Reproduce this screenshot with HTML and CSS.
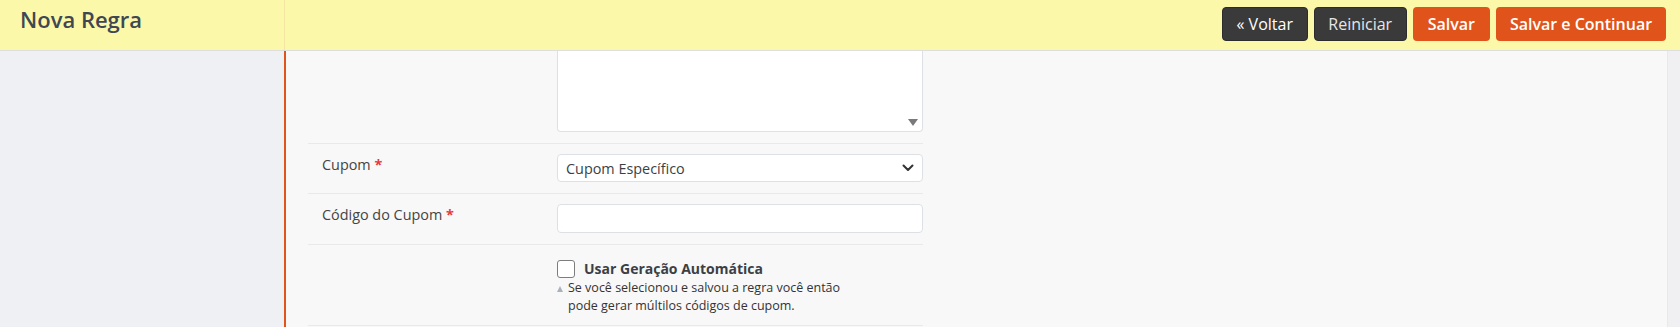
FILE: index.html
```html
<!DOCTYPE html>
<html lang="pt-BR">
<head>
  <meta charset="UTF-8" />
  <meta name="viewport" content="width=device-width, initial-scale=1.0" />
  <title>Nova Regra</title>
  <link rel="stylesheet" href="styles.css">
</head>
<body>

  <header class="topbar">
    <div class="brand">
      <h1>Nova Regra</h1>
    </div>
    <div class="actions">
      <button class="btn btn-dark btn-back">&laquo; Voltar</button>
      <button class="btn btn-dark btn-reset">Reiniciar</button>
      <button class="btn btn-primary">Salvar</button>
      <button class="btn btn-primary btn-continue">Salvar e Continuar</button>
    </div>
  </header>

  <div class="layout">
    <aside class="sidebar"></aside>

    <main class="content">
      <form class="rule-form">
        <div class="row row-textarea">
          <div class="label"></div>
          <div class="field">
            <div class="textarea">
              <span class="scroll-arrow"></span>
            </div>
          </div>
        </div>

        <div class="row">
          <label class="label">Cupom <span class="req">*</span></label>
          <div class="field">
            <div class="select">
              <span>Cupom Específico</span>
              <svg class="chevron" width="12" height="8" viewBox="0 0 12 8">
                <path d="M1.5 1.5 L6 6 L10.5 1.5" fill="none" stroke="#333" stroke-width="2" stroke-linecap="round" stroke-linejoin="round"/>
              </svg>
            </div>
          </div>
        </div>

        <div class="row">
          <label class="label">Código do Cupom <span class="req">*</span></label>
          <div class="field">
            <div class="input"></div>
          </div>
        </div>

        <div class="row row-check">
          <div class="label"></div>
          <div class="field">
            <label class="check">
              <span class="box"></span>
              <span class="check-text">Usar Geração Automática</span>
            </label>
            <p class="note">
              <span class="note-icon"></span>
              <span>Se você selecionou e salvou a regra você então<br>pode gerar múltilos códigos de cupom.</span>
            </p>
          </div>
        </div>
      </form>
    </main>

    <div class="scrollbar"></div>
  </div>

</body>
</html>
```

FILE: styles.css
```css
* {
  margin: 0;
  padding: 0;
  box-sizing: border-box;
}
body {
  font-family: 'Open Sans', 'Noto Sans', sans-serif;
  color: #333;
  background: #f8f8f8;
  height: 100vh;
  overflow: hidden;
}
.topbar {
  display: flex;
  align-items: stretch;
  height: 51px;
  background: #fcf8a9;
  border-bottom: 1px solid #dedede;
}
.brand {
  width: 285px;
  padding: 4px 20px 0;
  border-right: 1px solid #f3e6a2;
}
.brand h1 {
  font-size: 22px;
  font-weight: 600;
  color: #3f4753;
  line-height: 30px;
}
.actions {
  flex: 1;
  display: flex;
  justify-content: flex-end;
  gap: 6px;
  padding: 7px 14px 0 0;
}
.btn {
  height: 34px;
  padding: 0 15px;
  border: 0;
  border-radius: 4px;
  font-family: inherit;
  font-size: 16px;
  color: #fff;
  cursor: pointer;
}
.btn-dark {
  background: #3a3a3a;
  border: 1px solid #2c2c2c;
}
.btn-back {
  width: 86px;
  font-weight: 500;
  padding: 0;
}
.btn-reset {
  width: 93px;
  color: #e6e6e6;
  padding: 0;
}
.btn-primary {
  background: #e0531a;
  font-weight: 600;
}
.btn-continue {
  width: 170px;
  padding: 0;
}
.layout {
  display: flex;
  height: calc(100vh - 51px);
}
.sidebar {
  width: 284px;
  background: #eef0f4;
}
.content {
  flex: 1;
  background: #f8f8f8;
  border-left: 2px solid #e0531a;
  padding-left: 22px;
}
.scrollbar {
  width: 13px;
  background: #f0f0f2;
  border-left: 1px solid #e9e9ec;
}
.rule-form {
  width: 615px;
}
.row {
  display: flex;
  padding: 10px 0 11px;
  border-bottom: 1px solid #e9e9e9;
}
.label {
  width: 249px;
  padding-left: 14px;
  font-size: 14.4px;
  line-height: 22px;
  color: #444;
}
.req {
  color: #e8383d;
  font-weight: 700;
}
.field {
  width: 366px;
}
.row-textarea {
  padding: 0 0 11px;
}
.textarea {
  position: relative;
  height: 81px;
  background: #fff;
  border: 1px solid #dde1e6;
  border-top: 0;
  border-radius: 0 0 4px 4px;
}
.scroll-arrow {
  position: absolute;
  right: 4px;
  bottom: 5px;
  border-left: 5.5px solid transparent;
  border-right: 5.5px solid transparent;
  border-top: 7px solid #7a7a7a;
}
.select {
  display: flex;
  align-items: center;
  justify-content: space-between;
  height: 28px;
  padding: 0 8px 0 8px;
  background: #fff;
  border: 1px solid #dde1e6;
  border-radius: 4px;
  font-size: 14.4px;
  color: #3a3f47;
}
.input {
  height: 29px;
  background: #fff;
  border: 1px solid #dde1e6;
  border-radius: 4px;
}
.row-check {
  padding: 14px 0 10px;
}
.check {
  display: flex;
  align-items: center;
  gap: 9px;
}
.box {
  width: 18px;
  height: 18px;
  background: #fff;
  border: 1.5px solid #7d7d7d;
  border-radius: 3px;
}
.check-text {
  font-size: 14px;
  font-weight: 700;
  color: #3b3f45;
  line-height: 20px;
}
.note {
  display: flex;
  gap: 5px;
  margin-top: 0;
  font-size: 12.5px;
  line-height: 18px;
  color: #333;
}
.note-icon {
  margin-top: 7px;
  border-left: 3.5px solid transparent;
  border-right: 3.5px solid transparent;
  border-bottom: 6px solid #a9b2ba;
  height: 0;
}
```
